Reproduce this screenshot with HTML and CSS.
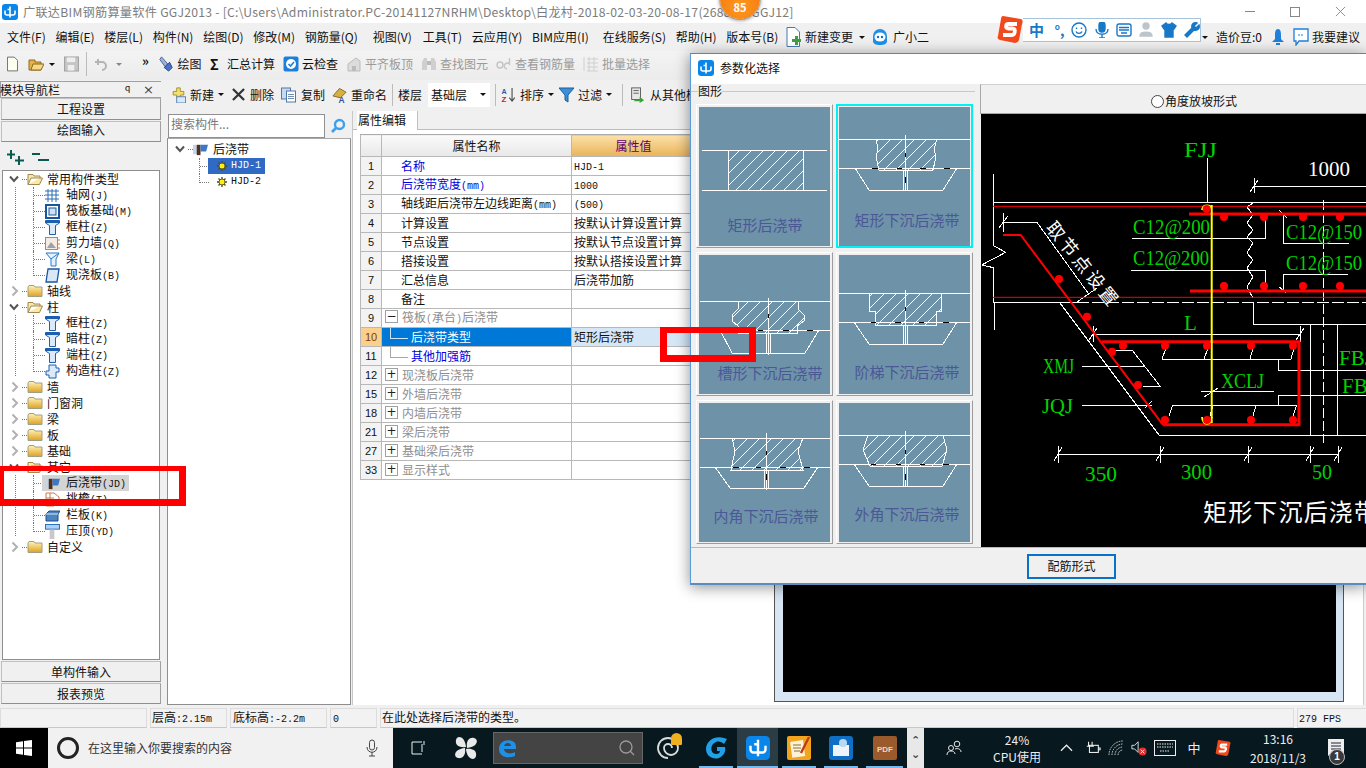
FILE: index.html
```html
<!DOCTYPE html>
<html lang="zh-CN">
<head>
<meta charset="utf-8">
<title>广联达BIM钢筋算量软件 GGJ2013</title>
<link rel="stylesheet" href="styles.css">
</head>
<body>
<svg class="defs" aria-hidden="true">
  <defs>
    <pattern id="hatch" patternUnits="userSpaceOnUse" width="12" height="12"><path class="hl" d="M0 12L12 0"/></pattern>
    <linearGradient id="fg" x1="0" y1="0" x2="0" y2="1"><stop offset="0" stop-color="#fff3b8"/><stop offset="1" stop-color="#e0a020"/></linearGradient>
    <symbol id="logo" viewBox="0 0 16 16"><rect width="16" height="16" rx="3" fill="#0a86ea"/><path d="M8 2.5V13.5M3 6.5V9a2 2 0 0 0 2 2H11a2 2 0 0 0 2-2V6.5M5.5 5.5H8" fill="none" stroke="#fff" stroke-width="1.6"/></symbol>
    <symbol id="fc" viewBox="0 0 16 14"><path d="M1 3V12.5H15V3H8L7 1.5H2L1 3Z" fill="url(#fg)" stroke="#a0a080"/></symbol>
    <symbol id="fo" viewBox="0 0 16 14"><path d="M1 12.5V2.500H6L7 4H13V6H4L1 12.5H12.500L15.500 6H13" fill="#f9e9a8" stroke="#a08850"/></symbol>
    <symbol id="chr" viewBox="0 0 8 12"><path d="M1.500 1.500L6 6L1.500 10.500" fill="none" stroke="#b0b0b0" stroke-width="2"/></symbol>
    <symbol id="chd" viewBox="0 0 10 8"><path d="M1 1.500L5 6L9 1.500" fill="none" stroke="#555" stroke-width="2"/></symbol>
    <symbol id="tcol" viewBox="0 0 15 15"><path d="M.5.500H14.500V3L10.500 5.500V14.500H4.500V5.500L.5 3Z" fill="#dbe9f9" stroke="#1d5fae"/><path d="M.5 2H14.500" stroke="#1d5fae" stroke-width="2"/></symbol>
    <symbol id="grid" viewBox="0 0 15 15"><path d="M3 1V14M7 1V14M11 1V14M0 3H14M0 7H14M0 11H14" stroke="#2f6cb8" fill="none"/></symbol>
    <symbol id="raft" viewBox="0 0 15 15"><rect x="1" y="1" width="13" height="13" fill="#fff" stroke="#17579e" stroke-width="2"/><rect x="4" y="4" width="7" height="7" fill="#cfe0f4" stroke="#17579e"/></symbol>
    <symbol id="wall" viewBox="0 0 15 15"><rect x=".5" y="1.500" width="12" height="12" fill="#f4ece4" stroke="#c08060"/><path d="M2 12L6 6L11 12Z" fill="#a0a0a0"/><path d="M13 4H15M13 8H15M13 12H15" stroke="#e07820"/></symbol>
    <symbol id="beam" viewBox="0 0 15 15"><path d="M1 1H14L11 7V14H6V7Z" fill="#e4f0fb" stroke="#2a78c8"/><path d="M6 7L14 1" stroke="#2a78c8"/></symbol>
    <symbol id="slab" viewBox="0 0 15 15"><path d="M3 1H14L12 14H1Z" fill="#d8e8f8" stroke="#17579e" stroke-width="1.300"/></symbol>
    <symbol id="post" viewBox="0 0 15 15"><path d="M4 1H11V4H14V8H11V14H4V11H1V7H4Z" fill="#dbe9f9" stroke="#1d5fae"/></symbol>
    <symbol id="band" viewBox="0 0 16 14"><path d="M0 2H5V12H0Z" fill="#c8d4e4"/><path d="M4 2H8V13H4Z" fill="#50301c"/><path d="M8 2H16L14 9H8Z" fill="#3e78c4"/></symbol>
    <symbol id="eave" viewBox="0 0 15 15"><path d="M1 1H9L14 5V9H9V14H1Z" fill="#fff" stroke="#d07a50"/><path d="M5 1V14M1 6H9" stroke="#d07a50"/></symbol>
    <symbol id="rail" viewBox="0 0 15 15"><path d="M1 6L4 3H15L13 6V13H1Z" fill="#4c84c0" stroke="#1d4f8e"/><path d="M1 6H13" stroke="#d8e8f8"/></symbol>
    <symbol id="ptop" viewBox="0 0 16 16"><rect x=".5" y=".5" width="15" height="5" fill="#aed0f4" stroke="#1d6fc0"/><rect x="5" y="6" width="5" height="10" fill="#c8c8c8"/></symbol>
    <symbol id="gear" viewBox="0 0 12 12"><path d="M6 0V12M0 6H12M1.800 1.800L10.200 10.200M10.200 1.800L1.800 10.200" stroke="#4a4a20" stroke-width="1.600"/><circle cx="6" cy="6" r="3.600" fill="#ffee10" stroke="#4a4a20"/></symbol>
    <symbol id="mag" viewBox="0 0 16 16"><circle cx="9.500" cy="6.500" r="4.500" fill="none" stroke="#3da0ef" stroke-width="2.400"/><path d="M6 10L2 14" stroke="#3da0ef" stroke-width="2.600"/></symbol>
    <symbol id="doc" viewBox="0 0 12 16"><path d="M.5.500H8L11.500 4V15.500H.5Z" fill="#fdfdf0" stroke="#666"/></symbol>
    <symbol id="open" viewBox="0 0 16 16"><path d="M1 14V4H7V6H13V14Z" fill="#e8b048" stroke="#8a6a20"/><path d="M3 14L5 8H16L13 14Z" fill="#f8d880" stroke="#8a6a20"/></symbol>
    <symbol id="save" viewBox="0 0 16 16"><rect x=".5" y=".5" width="15" height="15" fill="#c4c4c4" stroke="#a0a0a0"/><rect x="3" y="1" width="9" height="5" fill="#eee"/><rect x="4" y="9" width="7" height="6" fill="#eee"/></symbol>
    <symbol id="undo" viewBox="0 0 14 14"><path d="M4 2V8M1 5H8A4 4 0 0 1 8 13" fill="none" stroke="#b4b4b4" stroke-width="2"/></symbol>
    <symbol id="paint" viewBox="0 0 16 18"><path d="M3 1L10 9L7 12L1 4Z" fill="#98b4d8" stroke="#4a5a90"/><path d="M6 13L12 7L15 13L11 17Z" fill="#4a70c8" stroke="#283c80"/></symbol>
    <symbol id="cloudok" viewBox="0 0 16 16"><rect x=".5" y=".5" width="15" height="15" rx="2" fill="#1e7fd8"/><circle cx="8" cy="8" r="5" fill="#fff"/><path d="M5.500 8L7.500 10L11 6" fill="none" stroke="#1e7fd8" stroke-width="1.600"/></symbol>
    <symbol id="gbox" viewBox="0 0 16 16"><path d="M2 15V8L10 2L14 5V15Z" fill="#dcdcdc" stroke="#bbb"/><path d="M6 15V10H10V15" fill="#bbb"/></symbol>
    <symbol id="gbin" viewBox="0 0 16 16"><path d="M1 6L3 2H6V14H1ZM15 6L13 2H10V14H15Z" fill="#cfcfcf"/><rect x="6" y="5" width="4" height="4" fill="#bbb"/></symbol>
    <symbol id="gvw" viewBox="0 0 16 16"><circle cx="4" cy="9" r="3" fill="none" stroke="#c4c4c4" stroke-width="1.400"/><path d="M11 13A3 3 0 1 1 13.500 8V2" fill="none" stroke="#c4c4c4" stroke-width="1.400"/></symbol>
    <symbol id="gbat" viewBox="0 0 16 16"><path d="M1 1V15M4 3H15M4 7H15M4 11H15M4 15H15M6 1V15M11 1V15" stroke="#cfcfcf"/></symbol>
    <symbol id="add" viewBox="0 0 16 18"><path d="M6 1H10V5H14V9H10V12H6V9H2V5H6Z" fill="#f4e070" stroke="#a08820"/><rect x="6" y="11" width="10" height="7" fill="#dce8f8" stroke="#4a78b0"/></symbol>
    <symbol id="xx" viewBox="0 0 14 14"><path d="M1 1L13 13M13 1L1 13" stroke="#333" stroke-width="2.400"/></symbol>
    <symbol id="copy" viewBox="0 0 15 15"><rect x=".5" y=".5" width="9" height="11" fill="#c8daf0" stroke="#5078a8"/><rect x="5.500" y="3.500" width="9" height="11" fill="#fff" stroke="#5078a8"/><path d="M7 7H13M7 9H13M7 11H13" stroke="#7090b8"/></symbol>
    <symbol id="ren" viewBox="0 0 16 16"><path d="M1 9L8 1L15 5L9 11Z" fill="#d8b040" stroke="#806820"/><text x="7" y="16" class="ren-a">A</text></symbol>
    <symbol id="sortaz" viewBox="0 0 16 18"><path d="M12 1V15M9 12L12 16L15 12" fill="none" stroke="#444" stroke-width="1.200"/><text x="0" y="8" class="az-a">A</text><text x="0" y="17" class="az-z">Z</text></symbol>
    <symbol id="funnel" viewBox="0 0 15 16"><path d="M0 1H15L9 8V15L6 13V8Z" fill="#3a90d8" stroke="#1c5c98"/></symbol>
    <symbol id="import" viewBox="0 0 16 18"><rect x="2" y="1" width="10" height="13" fill="#e8e8e8" stroke="#555"/><path d="M4 4H10M4 7H10" stroke="#555"/><path d="M5 14H11V11L16 15L11 18V16H5Z" fill="#3ca03c"/></symbol>
    <symbol id="newchg" viewBox="0 0 15 20"><path d="M1 .5H9L13.500 5V19.500H1Z" fill="#fff" stroke="#4a78b0"/><path d="M9 9H12V12H15V15H12V18H9V15H6V12H9Z" fill="#3ea040"/></symbol>
    <symbol id="ghost" viewBox="0 0 18 18"><path d="M2 8A7 7 0 0 1 16 8V13C16 16 13 17 9 17S2 16 2 13Z" fill="#1e90e8"/><ellipse cx="9" cy="9" rx="5.500" ry="4.500" fill="#fff"/><circle cx="7" cy="9" r="1.200" fill="#1e6ec0"/><circle cx="11" cy="9" r="1.200" fill="#1e6ec0"/></symbol>
    <symbol id="bell" viewBox="0 0 12 18"><path d="M6 1C3.500 1 3 4 3 7V11L0 14H12L9 11V7C9 4 8.500 1 6 1Z" fill="#1e80dc"/><path d="M4 15H8V17H4Z" fill="#1e80dc"/></symbol>
    <symbol id="chat" viewBox="0 0 16 18"><path d="M1 1H15V13H6L3 17V13H1Z" fill="#fff" stroke="#1e80dc" stroke-width="1.300"/><path d="M5 7H11" stroke="#1e80dc" stroke-dasharray="2 1"/></symbol>
    <symbol id="sg" viewBox="0 0 26 27"><path d="M6 0L24 3C26 4 26 6 25 8L22 24C21 26 20 27 18 27L3 24C1 23 0 22 1 20L4 3C4 1 5 0 6 0Z" fill="#f2491c"/><path d="M20 8H11C9 8 8 12 11 12.500H16C19 13 18 19 15 19H6" fill="none" stroke="#fff" stroke-width="3.800"/></symbol>
    <symbol id="win" viewBox="0 0 16 16"><path d="M0 2.200L7 1.200V7.600H0ZM8 1L16 0V7.600H8ZM0 8.400H7V14.800L0 13.800ZM8 8.400H16V16L8 15Z" fill="#fff"/></symbol>
    <symbol id="fan" viewBox="0 0 24 24"><path d="M12 11C5 12 1 9 2 4S11 0 12 11ZM13 12C12 5 15 1 20 2S24 11 13 12ZM12 13C19 12 23 15 22 20S13 24 12 13ZM11 12C12 19 9 23 4 22S0 13 11 12Z" fill="#e8eaea"/></symbol>
    <symbol id="ie" viewBox="0 0 20 22"><path d="M18 12H6C6 16 12 18 17 15V19C10 22 1 20 1 12C1 4 10 1 16 5C18 7 18 9 18 12ZM6 9H13C13 5 7 5 6 9Z" fill="#1e90e8"/></symbol>
    <symbol id="gg" viewBox="0 0 24 24"><path d="M20 2C12-1 2 4 2 13C2 20 9 24 15 22C20 20 22 15 21 11H13V15H16C16 18 12 19 9 17C6 14 7 8 12 6C15 5 18 6 20 8L23 3Z" fill="#21a0e8"/></symbol>
    <symbol id="swirl" viewBox="0 0 24 24"><path d="M12 22A10 10 0 1 1 22 12A7 7 0 0 1 8 12A4 4 0 0 1 16 12" fill="none" stroke="#d8dcdc" stroke-width="1.800"/></symbol>
    <symbol id="notes" viewBox="0 0 24 24"><rect width="24" height="24" rx="2" fill="#f2a51c"/><rect x="4" y="5" width="13" height="16" fill="#fdf4d8" transform="rotate(-8 10 12)"/><path d="M6 9H14M6 12H14M7 15H13" stroke="#8a6a40"/><path d="M22 1L14 17" stroke="#c03a18" stroke-width="2.400"/></symbol>
    <symbol id="book" viewBox="0 0 24 24"><rect width="24" height="24" rx="3" fill="#0f6fc4"/><path d="M4 9H12V20H4ZM12 9H20V20H12Z" fill="#eef4fa"/><circle cx="14" cy="7" r="4" fill="#b8d8f4"/></symbol>
    <symbol id="pdf" viewBox="0 0 24 24"><rect width="24" height="24" rx="2" fill="#9a5a2c"/><text x="12" y="16" class="pdf-t">PDF</text></symbol>
    <symbol id="people" viewBox="0 0 16 16"><circle cx="11" cy="4" r="2.800" fill="none" stroke="#e8e8e8"/><circle cx="5" cy="8" r="2.500" fill="none" stroke="#e8e8e8"/><path d="M1 15C1 12 3 11 5 11S9 12 9 14M9 9C12 8 15 9 15 12" fill="none" stroke="#e8e8e8"/></symbol>
    <symbol id="plug" viewBox="0 0 18 16"><rect x="5" y="5" width="10" height="8" fill="none" stroke="#eee" stroke-width="1.200"/><path d="M4 1V6M8 1V6M2 6H10M15 8H17V10H15" stroke="#eee" stroke-width="1.200" fill="none"/></symbol>
    <symbol id="wifi" viewBox="0 0 16 16"><path d="M1 15A14 14 0 0 1 15 1M4 15A11 11 0 0 1 15 4M7 15A8 8 0 0 1 15 7M10 15A5 5 0 0 1 15 10" fill="none" stroke="#d8d8d8" stroke-dasharray="1.500 1"/></symbol>
    <symbol id="spk" viewBox="0 0 18 18"><path d="M1 6H4L8 2V14L4 10H1Z" fill="none" stroke="#eee"/><circle cx="13" cy="13" r="4.500" fill="#e03030"/><path d="M11 11L15 15M15 11L11 15" stroke="#fff"/></symbol>
    <symbol id="kbd" viewBox="0 0 22 16"><rect x=".5" y=".5" width="21" height="15" fill="none" stroke="#eee"/><path d="M3 4H19M3 7H19M6 11H16" stroke="#eee" stroke-dasharray="1.500 1"/></symbol>
    <symbol id="note" viewBox="0 0 16 18"><path d="M0 0H16V14H4L0 17Z" fill="#eee"/><path d="M3 4H13M3 7H13M3 10H13" stroke="#223"/></symbol>
    <symbol id="micg" viewBox="0 0 12 18"><rect x="3.500" y="1" width="5" height="10" rx="2.500" fill="none" stroke="#444"/><path d="M1 8C1 15 11 15 11 8M6 13V17M3 17H9" fill="none" stroke="#444"/></symbol>
    <symbol id="taskv" viewBox="0 0 16 18"><path d="M3 3H13M3 15H13M3 3V15" stroke="#eee" fill="none"/><path d="M13 5V13" stroke="#eee"/><path d="M15 2V6" stroke="#eee"/></symbol>
  </defs>
</svg>

<div class="screen">
  <header class="titlebar">
    <svg class="ico16"><use href="#logo"/></svg>
    <span class="title-text">广联达BIM钢筋算量软件 GGJ2013 - [C:\Users\Administrator.PC-20141127NRHM\Desktop\白龙村-2018-02-03-20-08-17(2688版).GGJ12]</span>
    <div class="winbtns">
      <span class="wb-min"></span>
      <span class="wb-max"></span>
      <svg class="wb-close" viewBox="0 0 12 12"><path d="M1 1L11 11M11 1L1 11"/></svg>
    </div>
  </header>

  <nav class="menubar">
    <span class="mi">文件(F)</span><span class="mi">编辑(E)</span><span class="mi">楼层(L)</span><span class="mi">构件(N)</span><span class="mi">绘图(D)</span><span class="mi">修改(M)</span><span class="mi mi-q">钢筋量(Q)</span><span class="mi mi-v">视图(V)</span><span class="mi">工具(T)</span><span class="mi">云应用(Y)</span><span class="mi mi-bim">BIM应用(I)</span><span class="mi">在线服务(S)</span><span class="mi">帮助(H)</span><span class="mi">版本号(B)</span>
    <svg class="mico1"><use href="#newchg"/></svg><span class="mi mi-a">新建变更</span><i class="arrow arrow-m"></i>
    <svg class="mico2"><use href="#ghost"/></svg><span class="mi">广小二</span>
    <div class="menu-right">
      <i class="arrow"></i><span class="mi mi-b">造价豆:0</span>
      <svg class="mico3"><use href="#bell"/></svg>
      <svg class="mico4"><use href="#chat"/></svg><span class="mi">我要建议</span>
    </div>
  </nav>

  <div class="toolbar">
    <div class="tgroup tg1">
      <svg class="t-doc"><use href="#doc"/></svg>
      <svg class="t-open"><use href="#open"/></svg><i class="arrow"></i>
      <svg class="t-save"><use href="#save"/></svg>
      <i class="tsep"></i>
      <svg class="t-undo"><use href="#undo"/></svg><i class="arrow arrow-g"></i>
      <span class="more">»</span>
    </div>
    <div class="tgroup tg2">
      <svg class="t-i"><use href="#paint"/></svg><span class="t-l">绘图</span>
      <span class="sigma">Σ</span><span class="t-l">汇总计算</span>
      <svg class="t-i"><use href="#cloudok"/></svg><span class="t-l">云检查</span>
      <svg class="t-i"><use href="#gbox"/></svg><span class="t-l dim">平齐板顶</span>
      <svg class="t-i"><use href="#gbin"/></svg><span class="t-l dim">查找图元</span>
      <svg class="t-i"><use href="#gvw"/></svg><span class="t-l dim">查看钢筋量</span>
      <svg class="t-i"><use href="#gbat"/></svg><span class="t-l dim">批量选择</span>
    </div>
  </div>

  <main class="workspace">
    <aside class="leftnav">
      <div class="nav-head"><span>模块导航栏</span><span class="pin">ꟼ</span><span class="closex">×</span></div>
      <button class="navbtn nb1">工程设置</button>
      <button class="navbtn nb2">绘图输入</button>
      <div class="tree-tools">
        <svg class="pm" viewBox="0 0 17 15"><path d="M4 0V9M0 4.500H8M12 6V15M8 10.500H17" stroke="#0a5a50" stroke-width="2"/></svg>
        <svg class="pm pm2" viewBox="0 0 17 15"><path d="M0 4H8M6 10H17" stroke="#0a5a50" stroke-width="2"/></svg>
      </div>
      <div class="tree navtree">
        <div class="row"><svg class="chev-d"><use href="#chd"/></svg><i class="hdot"></i><svg class="fold"><use href="#fo"/></svg><span>常用构件类型</span></div>
        <div class="kids">
          <div class="leaf"><i class="tee"></i><svg class="lic"><use href="#grid"/></svg><span>轴网<b>(J)</b></span></div>
          <div class="leaf"><i class="tee"></i><svg class="lic"><use href="#raft"/></svg><span>筏板基础<b>(M)</b></span></div>
          <div class="leaf"><i class="tee"></i><svg class="lic"><use href="#tcol"/></svg><span>框柱<b>(Z)</b></span></div>
          <div class="leaf"><i class="tee"></i><svg class="lic"><use href="#wall"/></svg><span>剪力墙<b>(Q)</b></span></div>
          <div class="leaf"><i class="tee"></i><svg class="lic"><use href="#beam"/></svg><span>梁<b>(L)</b></span></div>
          <div class="leaf"><i class="tee"></i><svg class="lic"><use href="#slab"/></svg><span>现浇板<b>(B)</b></span></div>
        </div>
        <div class="row"><svg class="chev-r"><use href="#chr"/></svg><i class="hdot"></i><svg class="fold"><use href="#fc"/></svg><span>轴线</span></div>
        <div class="row"><svg class="chev-d"><use href="#chd"/></svg><i class="hdot"></i><svg class="fold"><use href="#fo"/></svg><span>柱</span></div>
        <div class="kids">
          <div class="leaf"><i class="tee"></i><svg class="lic"><use href="#tcol"/></svg><span>框柱<b>(Z)</b></span></div>
          <div class="leaf"><i class="tee"></i><svg class="lic"><use href="#tcol"/></svg><span>暗柱<b>(Z)</b></span></div>
          <div class="leaf"><i class="tee"></i><svg class="lic"><use href="#tcol"/></svg><span>端柱<b>(Z)</b></span></div>
          <div class="leaf"><i class="tee"></i><svg class="lic"><use href="#post"/></svg><span>构造柱<b>(Z)</b></span></div>
        </div>
        <div class="row"><svg class="chev-r"><use href="#chr"/></svg><i class="hdot"></i><svg class="fold"><use href="#fc"/></svg><span>墙</span></div>
        <div class="row"><svg class="chev-r"><use href="#chr"/></svg><i class="hdot"></i><svg class="fold"><use href="#fc"/></svg><span>门窗洞</span></div>
        <div class="row"><svg class="chev-r"><use href="#chr"/></svg><i class="hdot"></i><svg class="fold"><use href="#fc"/></svg><span>梁</span></div>
        <div class="row"><svg class="chev-r"><use href="#chr"/></svg><i class="hdot"></i><svg class="fold"><use href="#fc"/></svg><span>板</span></div>
        <div class="row"><svg class="chev-r"><use href="#chr"/></svg><i class="hdot"></i><svg class="fold"><use href="#fc"/></svg><span>基础</span></div>
        <div class="row"><svg class="chev-d"><use href="#chd"/></svg><i class="hdot"></i><svg class="fold"><use href="#fo"/></svg><span>其它</span></div>
        <div class="kids">
          <div class="leaf selected"><i class="tee"></i><span class="sel-wrap"><svg class="lic"><use href="#band"/></svg><span>后浇带<b>(JD)</b></span></span></div>
          <div class="leaf"><i class="tee"></i><svg class="lic"><use href="#eave"/></svg><span>挑檐<b>(T)</b></span></div>
          <div class="leaf"><i class="tee"></i><svg class="lic"><use href="#rail"/></svg><span>栏板<b>(K)</b></span></div>
          <div class="leaf"><i class="tee"></i><svg class="lic"><use href="#ptop"/></svg><span>压顶<b>(YD)</b></span></div>
        </div>
        <div class="row"><svg class="chev-r"><use href="#chr"/></svg><i class="hdot"></i><svg class="fold"><use href="#fc"/></svg><span>自定义</span></div>
      </div>
      <button class="navbtn nb3">单构件输入</button>
      <button class="navbtn nb4">报表预览</button>
    </aside>

    <div class="content">
      <div class="subbar">
        <svg class="s-i s-add"><use href="#add"/></svg><span class="s-l">新建</span><i class="arrow"></i>
        <svg class="s-i s-x"><use href="#xx"/></svg><span class="s-l s-del">删除</span>
        <svg class="s-i s-copy"><use href="#copy"/></svg><span class="s-l s-cp">复制</span>
        <svg class="s-i s-ren"><use href="#ren"/></svg><span class="s-l">重命名</span>
        <i class="ssep ssep1"></i><span class="s-l">楼层</span>
        <span class="floor-sel"><span>基础层</span><i class="arrow"></i></span>
        <i class="ssep"></i>
        <svg class="s-i"><use href="#sortaz"/></svg><span class="s-l">排序</span><i class="arrow arrow-t"></i>
        <svg class="s-i"><use href="#funnel"/></svg><span class="s-l">过滤</span><i class="arrow arrow-t"></i>
        <i class="ssep ssep3"></i>
        <svg class="s-i s-imp"><use href="#import"/></svg><span class="s-l">从其他楼层复制构件</span>
      </div>
      <div class="panes">
        <section class="midpane">
          <div class="searchrow"><div class="searchbox">搜索构件...</div><svg class="searchico"><use href="#mag"/></svg></div>
          <div class="tree comptree">
            <div class="row"><svg class="chev-d"><use href="#chd"/></svg><i class="hdot"></i><svg class="lic"><use href="#band"/></svg><span>后浇带</span></div>
            <div class="ckids">
              <div class="cleaf"><i class="tee"></i><span class="hjd hjd-on"><svg class="gear"><use href="#gear"/></svg><b>HJD-1</b></span></div>
              <div class="cleaf"><i class="tee"></i><span class="hjd"><svg class="gear"><use href="#gear"/></svg><b>HJD-2</b></span></div>
            </div>
          </div>
        </section>
        <section class="proppane">
          <div class="tabs"><span class="tab">属性编辑</span></div>
          <table class="props">
            <colgroup><col class="c-n"><col class="c-k"><col class="c-v"></colgroup>
            <tr class="ph"><th></th><th>属性名称</th><th class="valh">属性值</th></tr>
            <tr><td class="n">1</td><td class="k blue">名称</td><td class="v"><b>HJD-1</b></td></tr>
            <tr><td class="n">2</td><td class="k blue">后浇带宽度<b>(mm)</b></td><td class="v"><b>1000</b></td></tr>
            <tr><td class="n">3</td><td class="k">轴线距后浇带左边线距离<b>(mm)</b></td><td class="v"><b>(500)</b></td></tr>
            <tr><td class="n">4</td><td class="k">计算设置</td><td class="v">按默认计算设置计算</td></tr>
            <tr><td class="n">5</td><td class="k">节点设置</td><td class="v">按默认节点设置计算</td></tr>
            <tr><td class="n">6</td><td class="k">搭接设置</td><td class="v">按默认搭接设置计算</td></tr>
            <tr><td class="n">7</td><td class="k">汇总信息</td><td class="v">后浇带加筋</td></tr>
            <tr><td class="n">8</td><td class="k">备注</td><td class="v"></td></tr>
            <tr><td class="n">9</td><td class="k gray"><i class="box">−</i>筏板<b>(</b>承台<b>)</b>后浇带</td><td class="v"></td></tr>
            <tr class="cur"><td class="n">10</td><td class="k kid2 branch">后浇带类型</td><td class="v">矩形后浇带</td></tr>
            <tr><td class="n">11</td><td class="k kid2 blue branch branch-end">其他加强筋</td><td class="v"></td></tr>
            <tr><td class="n">12</td><td class="k gray"><i class="box">+</i>现浇板后浇带</td><td class="v"></td></tr>
            <tr><td class="n">15</td><td class="k gray"><i class="box">+</i>外墙后浇带</td><td class="v"></td></tr>
            <tr><td class="n">18</td><td class="k gray"><i class="box">+</i>内墙后浇带</td><td class="v"></td></tr>
            <tr><td class="n">21</td><td class="k gray"><i class="box">+</i>梁后浇带</td><td class="v"></td></tr>
            <tr><td class="n">27</td><td class="k gray"><i class="box">+</i>基础梁后浇带</td><td class="v"></td></tr>
            <tr><td class="n">33</td><td class="k gray"><i class="box">+</i>显示样式</td><td class="v"></td></tr>
          </table>
        </section>
        <section class="preview"><div class="preview-frame"><div class="preview-black"></div></div></section>
      </div>
    </div>
  </main>

  <footer class="statusbar">
    <span class="st st1"></span>
    <span class="st st2">层高<b>:2.15m</b></span>
    <span class="st st3">底标高<b>:-2.2m</b></span>
    <span class="st st4"><b>0</b></span>
    <span class="st st5">在此处选择后浇带的类型。</span>
    <span class="st st6"><b>279 FPS</b></span>
  </footer>

  <div class="taskbar">
    <div class="tb tb-start"><svg class="tb-win"><use href="#win"/></svg></div>
    <div class="tb tb-search"><i class="cortana"></i><span class="tb-hint">在这里输入你要搜索的内容</span><svg class="tb-mic"><use href="#micg"/></svg></div>
    <div class="tb tb-tv"><svg class="tb-ic18"><use href="#taskv"/></svg></div>
    <div class="tb tb-fan"><svg class="tb-ic26"><use href="#fan"/></svg></div>
    <div class="tb tb-ie"><svg class="tb-e"><use href="#ie"/></svg><svg class="tb-ms" viewBox="0 0 16 16"><circle cx="7" cy="7" r="6"/><path d="M11 11L15 15"/></svg></div>
    <div class="tb tb-sw"><svg class="tb-ic24"><use href="#swirl"/></svg><i class="tb-bellmark"></i></div>
    <div class="tb tb-g run"><svg class="tb-ic24"><use href="#gg"/></svg></div>
    <div class="tb tb-act run"><svg class="tb-ic24"><use href="#logo"/></svg></div>
    <div class="tb tb-n run"><svg class="tb-ic24"><use href="#notes"/></svg></div>
    <div class="tb tb-n run"><svg class="tb-ic24"><use href="#book"/></svg></div>
    <div class="tb tb-p run"><svg class="tb-ic24"><use href="#pdf"/></svg></div>
    <div class="tb tb-scroll"><span>⌃</span><span>⌄</span></div>
    <div class="tb tb-people"><svg class="tb-ic16"><use href="#people"/></svg></div>
    <div class="tb tb-cpu"><span>24%</span><span>CPU使用</span></div>
    <div class="tb tb-up"><svg viewBox="0 0 14 8" class="tb-caret"><path d="M1 7L7 1L13 7"/></svg></div>
    <div class="tb tb-tray22"><svg class="tb-ic16"><use href="#plug"/></svg></div>
    <div class="tb tb-tray24"><svg class="tb-ic16"><use href="#wifi"/></svg></div>
    <div class="tb tb-tray22"><svg class="tb-ic16"><use href="#spk"/></svg></div>
    <div class="tb tb-tray30"><svg class="tb-kbd"><use href="#kbd"/></svg></div>
    <div class="tb tb-zh">中</div>
    <div class="tb tb-tray30"><svg class="tb-ic16"><use href="#sg"/></svg></div>
    <div class="tb tb-clock"><span>13:16</span><span>2018/11/3</span></div>
    <div class="tb tb-note"><svg class="tb-ic18"><use href="#note"/></svg><i class="tb-count">1</i></div>
  </div>

  <div class="badge85"><span>85</span></div>

  <div class="sogou">
    <svg class="sg-logo"><use href="#sg"/></svg>
    <div class="sg-bar">
      <span class="sg-zh">中</span><span class="sg-pt">°,</span>
      <svg class="sg-i" viewBox="0 0 16 16"><circle cx="8" cy="8" r="7"/><path d="M5 9.500C6 12 10 12 11 9.500M5.500 5.500V7M10.500 5.500V7"/></svg>
      <svg class="sg-i" viewBox="0 0 16 16"><rect class="sg-fill" x="5" y="0" width="6" height="10" rx="3"/><path d="M2 7C2 14 14 14 14 7M8 12V16M5 16H11"/></svg>
      <svg class="sg-i" viewBox="0 0 16 16"><rect x="1" y="2" width="14" height="12" rx="2"/><path d="M3 5.500H13M3 8H13M5 11H11"/></svg>
      <svg class="sg-i sg-gray" viewBox="0 0 16 16"><circle class="sg-gfill" cx="7" cy="4" r="3"/><path class="sg-gfill" d="M1 14C1 9 13 9 13 14Z"/></svg>
      <svg class="sg-i" viewBox="0 0 16 16"><path class="sg-fill" d="M5 1L1 4L3 7L4 6V15H12V6L13 7L15 4L11 1C10 3 6 3 5 1Z"/></svg>
      <svg class="sg-i" viewBox="0 0 16 16"><path class="sg-fill" d="M15 3L12 6L10 4L13 1C10 0 7 2 8 6L1 13L3 15L10 8C14 9 16 6 15 3Z"/></svg>
    </div>
  </div>

  <div class="dialog">
    <div class="dlg-title"><svg class="ico16"><use href="#logo"/></svg><span>参数化选择</span></div>
    <div class="dlg-body">
      <fieldset class="shapes">
        <legend>图形</legend>
        <div class="thumbs">
          <div class="thumb">
            <svg viewBox="0 0 131 139">
              <rect class="hf" x="29" y="43" width="75" height="40"/>
              <path class="ln" d="M3 43H128M3 83H128M29 43V83M104 43V83"/>
              <text class="tt" x="66" y="124">矩形后浇带</text>
            </svg>
          </div>
          <div class="thumb thumb-on">
            <svg viewBox="0 0 131 139">
              <path class="hf" d="M37 32H98L96 50L94 63H40L38 50Z"/>
              <path class="ln" d="M0 32H131M0 61H131M37 32L39 42L37 50L40 63H94L97 50L95 42L98 32M66 28V84M16 61L30 83H104L118 61M64 63V83M68 63V83"/>
              <path class="dk" d="M33 61H39M58 61H63M81 61H87M105 61H111M66 46V50M66 70V76"/>
              <text class="tt" x="68" y="119">矩形下沉后浇带</text>
            </svg>
          </div>
          <div class="thumb">
            <svg viewBox="0 0 131 139">
              <path class="hf" d="M39 46H99V54L105 60V66L99 71V78H39V71L33 66V60L39 54Z"/>
              <path class="ln" d="M1 46H131M1 75H131M39 46V54L33 60V66L39 71V78H98V71L105 66V60L99 54V46M69 43V100M21 75L33 98H106L120 75M67 78V98M71 78V98"/>
              <path class="dk" d="M59 75H64M84 75H90M108 75H114M69 59V63"/>
              <text class="tt" x="71" y="124">槽形下沉后浇带</text>
            </svg>
          </div>
          <div class="thumb">
            <svg viewBox="0 0 131 139">
              <path class="hf" d="M30 38H102V56H97V70H36V56H30Z"/>
              <path class="ln" d="M0 38H131M0 67H131M30 38V56H36V70H97V56H102V38M66 35V90M15 67L30 89H104L118 67M64 70V89M68 70V89"/>
              <path class="dk" d="M32 67H37M56 67H62M80 67H85M104 67H110M66 52V56"/>
              <text class="tt" x="68" y="123">阶梯下沉后浇带</text>
            </svg>
          </div>
          <div class="thumb">
            <svg viewBox="0 0 131 139">
              <path class="hf" d="M33 35H104L99 48L104 67H32L36 48Z"/>
              <path class="ln" d="M1 35H131M1 64H131M33 35L36 48L32 67H104L99 48L104 35M67 30V87M16 64L31 85H105L119 64M65 67V85M69 67V85"/>
              <path class="dk" d="M34 64H40M57 64H62M81 64H87M105 64H111M67 48V52M67 71V77"/>
              <text class="tt" x="67" y="119">内角下沉后浇带</text>
            </svg>
          </div>
          <div class="thumb">
            <svg viewBox="0 0 131 139">
              <path class="hf" d="M29 32H104L108 47L103 63H31L24 47Z"/>
              <path class="ln" d="M0 32H131M0 61H131M29 32L24 47L31 63H103L108 47L104 32M66 28V84M15 61L30 83H104L118 61M64 63V83M68 63V83"/>
              <path class="dk" d="M32 61H37M57 61H62M81 61H86M104 61H110M66 47V51M66 71V77"/>
              <text class="tt" x="68" y="117">外角下沉后浇带</text>
            </svg>
          </div>
        </div>
      </fieldset>
      <div class="drawing">
        <div class="radio-row"><i class="radio"></i><span>角度放坡形式</span></div>
        <svg class="cad" viewBox="981 114 385 433">
          <path class="w" d="M993.500 174V245.700L1005.700 252.300L981.700 265L993.500 267.700V302M993 202.300H1366M993 302.300H1077"/>
          <path class="w dash" d="M1077 302.300H1366"/>
          <path class="w" d="M1207.300 158V202M1254 178V193M1250 192L1258 180M1254 186H1366"/>
          <path class="w" d="M1253 203L1247 207L1253 215L1247 223L1253 230L1247 237L1253 243L1247 253L1253 260L1247 268L1253 277L1247 287L1253 298"/>
          <path class="w" d="M1132 238H1265.700V218M1131 270.300H1265.700V290M1283 215V243H1349M1279 210L1287 218M1283 274H1348M1283 274V290L1279 287L1286 293"/>
          <path class="w" d="M1003 213V232M999 228L1008 216M1003 222H1036.700L1088 293M1077 302L1097 288M1060 303L1159 435H1366"/>
          <path class="w" d="M1253 302V324.300H1366M1310 324V435M1337.700 324V435"/>
          <path class="w dashdot" d="M1323 200V443"/>
          <path class="w" d="M1093 334.300H1300M1093 326V342M1089 340L1097 328M1300 326V342M1296 340L1304 328"/>
          <path class="w" d="M1162 359H1291M1162 359L1166 348M1250 359L1253 348M1291 359L1294 348M1204 359L1208 348M1278 359V370.700H1366M1278 405V395H1366M1172.700 405H1296.700M1172.700 405L1169 416M1256 405L1253 416M1296.700 405L1293 416M1213 405L1210 416"/>
          <path class="w" d="M1201 391H1274M1204 397L1218 388M1082 366.300H1145M1082 405H1152M1145 408L1152 401M1115 350H1132L1160 386H1143"/>
          <path class="w" d="M1058 454.300H1338M1058 446V463M1054 461L1062 447M1160 446V463M1156 461L1164 447M1248 446V463M1244 461L1252 447M1310 446V463M1306 461L1314 447M1338 446V463M1334 461L1342 447"/>
          <path class="w" d="M994 302V330"/>
          <path class="r1" d="M993 206.300H1366M993 297.300H1366"/>
          <path class="r3" d="M1189 214H1366M1190 291H1366"/>
          <path class="r2" d="M1003 235H1020.700L1162.700 424.700"/>
          <path class="r3" d="M1101.700 341.700H1299V424.700H1162.700"/>
          <path class="y2" d="M1211.700 205V423M1202 210C1203 204 1211 204 1211.700 210M1202 417C1203 426 1211 426 1212 417"/>
          <g class="dots">
            <circle cx="1206.700" cy="209" r="4"/>
            <circle cx="1224" cy="217" r="4"/><circle cx="1264" cy="217" r="4"/><circle cx="1303" cy="217" r="4"/><circle cx="1340" cy="217" r="4"/>
            <circle cx="1224" cy="286" r="4"/><circle cx="1264" cy="286" r="4"/><circle cx="1303" cy="286" r="4"/><circle cx="1340" cy="286" r="4"/>
            <circle cx="1059" cy="279" r="4"/><circle cx="1087" cy="316.700" r="4"/>
            <circle cx="1123" cy="345.700" r="4"/><circle cx="1165" cy="345.700" r="4"/><circle cx="1207" cy="345.700" r="4"/><circle cx="1251" cy="345.700" r="4"/><circle cx="1293" cy="345.700" r="4"/>
            <circle cx="1112" cy="351.700" r="4"/><circle cx="1138" cy="385" r="4"/>
            <circle cx="1165" cy="420" r="4"/><circle cx="1207" cy="420" r="4"/><circle cx="1251" cy="420" r="4"/><circle cx="1293" cy="420" r="4"/>
          </g>
          <text class="gt" x="1184" y="157" textLength="33" lengthAdjust="spacingAndGlyphs">FJJ</text>
          <text class="wt" x="1308" y="176" textLength="42" lengthAdjust="spacingAndGlyphs">1000</text>
          <text class="gt" x="1133" y="234" textLength="77" lengthAdjust="spacingAndGlyphs">C12@200</text>
          <text class="gt" x="1133" y="265" textLength="76" lengthAdjust="spacingAndGlyphs">C12@200</text>
          <text class="gt" x="1286" y="239" textLength="76" lengthAdjust="spacingAndGlyphs">C12@150</text>
          <text class="gt" x="1286" y="270" textLength="76" lengthAdjust="spacingAndGlyphs">C12@150</text>
          <text class="gt" x="1184" y="330">L</text>
          <text class="gt" x="1043" y="373" textLength="31" lengthAdjust="spacingAndGlyphs">XMJ</text>
          <text class="gt" x="1042" y="413" textLength="31" lengthAdjust="spacingAndGlyphs">JQJ</text>
          <text class="gt" x="1221" y="388" textLength="43" lengthAdjust="spacingAndGlyphs">XCLJ</text>
          <text class="gt" x="1339" y="365">FBJ</text>
          <text class="gt" x="1342" y="393">FBJ</text>
          <text class="gt" x="1085" y="481" textLength="32" lengthAdjust="spacingAndGlyphs">350</text>
          <text class="gt" x="1181" y="479" textLength="31" lengthAdjust="spacingAndGlyphs">300</text>
          <text class="gt" x="1312" y="479" textLength="20" lengthAdjust="spacingAndGlyphs">50</text>
          <text class="vt" transform="translate(1045 228) rotate(51)">取节点设置</text>
          <text class="ct" x="1203" y="521" textLength="175">矩形下沉后浇带</text>
        </svg>
      </div>
    </div>
    <div class="dlg-foot"><button class="dlg-btn">配筋形式</button></div>
  </div>

  <div class="redbox rb1"></div>
  <div class="redbox rb2"></div>
</div>
</body>
</html>
```

FILE: styles.css
```css
* { box-sizing: border-box; }
html, body { margin: 0; padding: 0; }
body { width: 1366px; height: 768px; overflow: hidden; background: #f0f0f0; font: 12px/16px "Noto Sans CJK SC", "Noto Sans", sans-serif; color: #111; }
.defs { display: block; width: 0; height: 0; }
.screen { position: relative; width: 1366px; height: 768px; overflow: hidden; display: flex; flex-direction: column; }
b { font-family: "Liberation Mono", monospace; font-weight: 400; font-size: 10px; }
button { font: inherit; color: inherit; }
i { font-style: normal; }

/* title */
.titlebar { flex: none; height: 23px; background: #fff; display: flex; align-items: center; padding-left: 2px; }
.ico16 { width: 16px; height: 16px; flex: none; }
.title-text { margin-left: 5px; color: #7c7c7c; font-size: 12.200px; letter-spacing: .25px; white-space: nowrap; }
.winbtns { margin-left: auto; display: flex; align-items: center; }
.wb-min { width: 10px; border-top: 1px solid #888; }
.wb-max { width: 10px; height: 10px; border: 1px solid #888; margin-left: 35px; }
.wb-close { width: 11px; height: 11px; margin: 0 20px 0 35px; fill: none; stroke: #888; }

/* menu */
.menubar { flex: none; height: 28px; background: #f0f0f0; display: flex; align-items: center; padding-left: 7px; white-space: nowrap; }
.mi { margin-right: 9.700px; }
.mi-q { margin-right: 15px; }
.mi-v { margin-right: 11px; }
.mi-bim { margin-right: 14px; }
.mico1 { width: 15px; height: 20px; margin: 0 4px 0 -2px; }
.mi-a { margin-right: 6px; }
.arrow { display: inline-block; width: 0; height: 0; border: 3px solid transparent; border-top: 3px solid #111; border-bottom: 0; flex: none; }
.arrow-m { margin-right: 6px; }
.arrow-g { border-top-color: #888; }
.mico2 { width: 18px; height: 18px; margin-right: 4px; }
.menu-right { margin-left: auto; display: flex; align-items: center; padding-right: 0; }
.mi-b { margin-left: 8px; margin-right: 10px; }
.mico3 { width: 12px; height: 18px; margin-right: 9px; }
.mico4 { width: 16px; height: 18px; margin-right: 3px; }
.menu-right .mi:last-child { margin-right: 6px; }

/* toolbar */
.toolbar { flex: none; height: 29px; background: linear-gradient(#f3f3f3, #ececec); display: flex; align-items: flex-start; }
.tgroup { display: flex; align-items: center; height: 26px; }
.tg1 { width: 152px; padding-left: 7px; }
.t-doc { width: 11px; height: 16px; margin-right: 10px; }
.t-open { width: 16px; height: 16px; margin-right: 5px; }
.t-save { width: 15px; height: 16px; margin-left: 9px; }
.tsep { width: 1px; height: 24px; background: #bbb; margin: 0 7px; }
.t-undo { width: 14px; height: 14px; margin-right: 8px; }
.more { margin-left: 20px; font-weight: 700; font-size: 13px; margin-top: -6px; }
.tg2 { padding-left: 6px; }
.t-i { width: 16px; height: 16px; margin-right: 3.500px; flex: none; }
.t-l { margin-right: 7.500px; white-space: nowrap; }
.dim { color: #9a9a9a; }
.sigma { width: 12px; margin: 0 5px 0 1px; font-weight: 700; font-size: 14px; }

/* workspace */
.workspace { flex: 1; min-height: 0; display: flex; }
.leftnav { flex: none; width: 161px; display: flex; flex-direction: column; padding-top: 1px; background: #f0f0f0; }
.nav-head { height: 17px; display: flex; align-items: center; border: 1px solid #a0a0a0; border-right: 0; line-height: 14px; }
.nav-head > span:first-child { flex: 1; margin-left: -1px; }
.pin { width: 18px; font-size: 9px; color: #222; font-family: "DejaVu Sans", sans-serif; }
.closex { width: 18px; font-size: 13px; color: #444; font-family: "DejaVu Sans", sans-serif; }
.navbtn { display: block; width: 160px; margin: 0 0 1px 1px; padding: 0; background: #f0f0f0; border: 1px solid #c0c0c0; border-bottom-color: #8f8f8f; border-right-color: #a0a0a0; }
.nb1 { height: 22px; }
.nb2 { height: 21px; padding-bottom: 3px; }
.nb3 { height: 21px; margin-top: 1px; }
.nb4 { height: 21px; }
.tree-tools { height: 27px; display: flex; align-items: center; padding: 2px 0 0 7px; }
.pm { width: 17px; height: 15px; }
.pm2 { margin-left: 8px; }
.tree { background: #fff; overflow: hidden; }
.navtree { width: 158px; height: 490px; margin-left: 2px; border: 1px solid #8e8e8e; padding-top: 0; }
.row, .leaf { display: flex; align-items: center; height: 16px; white-space: nowrap; }
.row { padding-left: 6px; }
.chev-d { width: 10px; height: 8px; }
.chev-r { width: 8px; height: 12px; margin-left: 2px; }
.hdot { width: 5px; margin-left: 3px; border-top: 1px dotted #777; }
.fold { width: 16px; height: 14px; margin: 0 4px 0 0; flex: none; }
.kids { margin-left: 12px; padding-left: 18px; position: relative; }
.kids::before { content: ""; position: absolute; left: 0; top: 0; bottom: 3px; border-left: 1px dotted #777; }
.tee { flex: none; align-self: flex-start; width: 12px; height: 16px; border-left: 1px dotted #777; }
.tee::after { content: ""; display: block; height: 8px; border-bottom: 1px dotted #777; }
.leaf:last-child .tee, .cleaf:last-child .tee { height: 9px; }
.lic { width: 15px; height: 15px; margin-right: 6px; flex: none; }
.sel-wrap { display: flex; align-items: center; background: #d4d4d4; height: 16px; width: 87px; margin-left: -3px; padding-left: 3px; }

/* content */
.content { flex: 1; min-width: 0; display: flex; flex-direction: column; padding-left: 6px; }
.subbar { flex: none; height: 29px; display: flex; align-items: center; padding: 0 0 0 4px; white-space: nowrap; }
.s-i { width: 15px; height: 16px; margin-right: 4px; flex: none; }
.s-l { margin-right: 4px; }
.subbar .arrow { margin-right: 8px; }
.subbar .arrow-t { margin-right: 5px; }
.s-x { width: 13px; height: 13px; margin-right: 5px; }
.s-copy { margin-left: 3px; margin-right: 5px; }
.s-ren { margin-left: 3px; }
.ssep { width: 1px; height: 22px; background: #bbb; margin: 0 5px; flex: none; }
.ssep1 { margin-left: 1px; }
.ssep3 { margin-right: 6px; }
.s-imp { width: 16px; margin-right: 5px; }
.floor-sel { width: 62px; height: 24px; margin-left: 2px; background: #fff; display: flex; align-items: center; justify-content: space-between; padding: 0 4px 0 3px; }
.floor-sel .arrow { margin-right: 0 !important; }
.panes { flex: 1; min-height: 0; display: flex; padding-bottom: 3px; }
.midpane { flex: none; width: 184px; display: flex; flex-direction: column; }
.searchrow { flex: none; height: 29px; display: flex; align-items: flex-start; padding: 5px 0 0 1px; }
.searchbox { width: 157px; height: 24px; background: #fff; border: 1px solid #909090; padding: 1px 2px; color: #777; }
.searchico { width: 16px; height: 16px; margin: 4px 0 0 5px; }
.comptree { flex: 1; border: 1px solid #8e8e8e; border-top-color: #aaa; padding-top: 2px; }
.comptree .row { padding-left: 7px; }
.comptree .lic { margin-right: 5px; }
.ckids { margin-left: 31px; padding-top: 1px; }
.cleaf { display: flex; align-items: center; height: 16px; }
.hjd { display: flex; align-items: center; width: 57px; height: 16px; padding-left: 9px; margin-left: -1px; color: #111; }
.hjd b { font-size: 10px; }
.hjd-on { background: #316ac5; color: #fff; }
.gear { width: 10px; height: 10px; margin-right: 4px; flex: none; }
.cleaf .tee { width: 10px; }

.proppane { flex: none; width: 420px; margin-left: 1px; background: #fff; position: relative; margin-top: 2px; height: 594px; border-left: 1px solid #c8c8c8; }
.tabs { height: 19px; background: #f0f0f0; border-bottom: 1px solid #bdbdbd; padding-left: 4px; }
.tab { display: inline-block; height: 19px; width: 61px; background: #fff; border-right: 1px solid #c0c0c0; padding: 1px 0 0 1px; }
.props { border-collapse: collapse; table-layout: fixed; width: 412px; margin: 4px 0 0 7px; }
.c-n { width: 21px; }
.c-k { width: 190px; }
.c-v { width: 201px; }
.props th, .props td { height: 19px; padding: 0; border: 1px solid #b8b8b8; white-space: nowrap; font-weight: 400; overflow: hidden; line-height: 14px; }
.props tr.ph th { height: 22px; background: linear-gradient(#fafafa, #e8e8e8); border-top-color: #aaa; }
.props tr.ph th.valh { background: linear-gradient(#fde0a8, #e8b45a); color: #5a0070; padding-right: 77px; }
.n { background: #f3f3f3; text-align: center; font-family: "Liberation Sans", sans-serif; font-size: 11px; }
.k { padding-left: 19px !important; }
.v { padding-left: 2px !important; }
.blue { color: #0000e0; }
.gray { color: #8e8e8e; padding-left: 3px !important; }
.box { display: inline-block; width: 13px; height: 13px; margin-right: 4px; border: 1px solid #a0a0a0; background: #fff; color: #222; text-align: center; font: 12px/11px "DejaVu Sans", sans-serif; vertical-align: top; }
.kid2 { padding-left: 29px !important; position: relative; }
.branch::before { content: ""; position: absolute; left: 8px; top: -4px; width: 17px; height: 14px; border-left: 1px solid #a8a8a8; border-bottom: 1px solid #a8a8a8; }
.branch-end::before { top: -10px; height: 20px; }
.cur .n { background: #fbd08c; color: #7a4000; }
.cur .k { background: #0078d7; color: #fff; }
.cur .branch::before { border-color: #cfe4f8; }
.cur .v { background: #d5e7f7; }
.preview { flex: none; width: 593px; padding: 0 0 3px 3px; margin-left: -1px; overflow: hidden; background: #fff; border-right: 1px solid #ccc; }
.preview-frame { height: 100%; width: 570px; background: #d8e6f4; border: 1px solid #555; border-width: 0 1px 1px 1px; padding: 0 7px 9px 8px; }
.preview-black { height: 100%; background: #000; }

/* status */
.statusbar { flex: none; height: 20px; display: flex; background: #f2f2f2; }
.st { flex: none; height: 20px; border: 1px solid #dcdcdc; border-bottom-color: #c8c8c8; margin-right: 3px; padding-left: 1px; white-space: nowrap; overflow: hidden; }
.st1 { width: 147px; }
.st2 { width: 77px; }
.st3 { width: 97px; padding-left: 2px; }
.st4 { width: 47px; padding-left: 2px; }
.st5 { width: 914px; }
.st6 { width: 70px; margin-right: 0; }

/* taskbar */
.taskbar { flex: none; height: 40px; display: flex; background: #07181e; color: #eee; }
.tb { flex: none; height: 40px; display: flex; align-items: center; justify-content: center; position: relative; }
.tb-start { width: 48px; background: #000; }
.tb-win { width: 16px; height: 16px; }
.tb-search { width: 345px; background: #f1f1f1; color: #333; justify-content: flex-start; padding-left: 9px; }
.cortana { width: 22px; height: 22px; border-radius: 50%; border: 3px solid #222; }
.tb-hint { margin-left: 9px; }
.tb-mic { width: 12px; height: 18px; margin-left: auto; margin-right: 15px; }
.tb-tv { width: 48px; }
.tb-fan { width: 50px; }
.tb-ie { width: 150px; height: 32px; margin: 4px 0 0 2px; background: #444; border: 1px solid #666; justify-content: space-between; padding: 0 7px 0 4px; }
.tb-e { width: 20px; height: 22px; }
.tb-ms { width: 16px; height: 16px; fill: none; stroke: #9a9a9a; stroke-width: 1.300; }
.tb-sw { width: 52px; justify-content: flex-start; padding-left: 13px; }
.tb-bellmark { position: absolute; left: 28px; top: 5px; width: 11px; height: 12px; border-radius: 6px 6px 1px 1px; background: #f0b020; }
.tb-ic24 { width: 24px; height: 24px; }
.tb-ic26 { width: 24px; height: 24px; }
.tb-ic18 { width: 16px; height: 18px; }
.tb-ic16 { width: 16px; height: 16px; }
.tb-g { width: 42px; }
.tb-act { width: 41px; background: #2b3c44; }
.tb-n { width: 42px; }
.tb-p { width: 45px; }
.run::after { content: ""; position: absolute; left: 4px; right: 4px; bottom: 0; height: 2px; background: #76b9ed; }
.tb-act::after { left: 0; right: 0; }
.tb-scroll { width: 17px; background: #e8e8e8; color: #444; flex-direction: column; font: 700 11px/14px "DejaVu Sans", sans-serif; }
.tb-people { width: 60px; }
.tb-cpu { width: 66px; flex-direction: column; line-height: 17px; }
.tb-up { width: 32px; }
.tb-caret { width: 13px; height: 8px; fill: none; stroke: #eee; stroke-width: 1.300; }
.tb-tray22 { width: 22px; }
.tb-tray24 { width: 24px; }
.tb-tray30 { width: 30px; }
.tb-kbd { width: 22px; height: 16px; }
.tb-zh { width: 28px; font-size: 13px; }
.tb-clock { width: 80px; flex-direction: column; line-height: 19px; }
.tb-note { width: 48px; padding-right: 12px; }
.tb-count { position: absolute; left: 11px; top: 21px; width: 16px; height: 16px; border-radius: 50%; background: #3a3a3a; border: 1px solid #bbb; color: #fff; font: 700 10px/14px "Liberation Sans", sans-serif; text-align: center; }

/* floating */
.badge85 { position: absolute; left: 720px; top: -21px; width: 40px; height: 40px; border-radius: 50%; background: radial-gradient(circle at 50% 70%, #ff9820, #f07008); box-shadow: 0 1px 4px rgba(0,0,0,.5), 0 0 0 1px #ddd; color: #fff; font-weight: 700; font-size: 11px; text-align: center; padding-top: 20px; }
.sogou { position: absolute; left: 997px; top: 16px; display: flex; align-items: center; }
.sg-logo { width: 26px; height: 27px; position: relative; z-index: 1; flex: none; }
.sg-bar { width: 178px; height: 24px; margin-top: 1px; background: #fff; border: 1px solid #a8c4dc; border-left: 0; display: flex; align-items: center; padding-left: 6px; color: #1878c8; }
.sg-zh { font-size: 15px; font-weight: 700; width: 19px; flex: none; }
.sg-pt { font-weight: 700; font-size: 14px; width: 23px; text-align: center; flex: none; }
.sg-i { width: 16px; height: 16px; margin-right: 6.500px; fill: none; stroke: #1878c8; stroke-width: 1.400; flex: none; }
.sg-fill { fill: #1878c8; }
.sg-gray { stroke: #bcc4cc; }
.sg-gfill { fill: #bcc4cc; }

.dialog { position: absolute; left: 690px; top: 53px; width: 676px; height: 532px; background: #f0f0f0; border-top: 1px solid #3a8fd8; border-left: 1px solid #5a9ad8; border-bottom: 2px solid #5a8cc0; box-shadow: 0 2px 14px rgba(0,0,0,.45); display: flex; flex-direction: column; }
.dlg-title { flex: none; height: 30px; background: #fff; display: flex; align-items: center; padding: 0 0 2px 7px; }
.dlg-title span { margin-left: 6px; }
.dlg-body { flex: none; height: 463px; display: flex; }
.shapes { flex: none; width: 284px; margin: 1px 0 0; padding: 0 0 0 5px; border: 0; border-top: 1px solid #c8c8c8; height: 456px; min-width: 0; }
.shapes legend { padding: 0; margin-left: 2px; line-height: 12px; }
.thumbs { display: grid; grid-template-columns: 137px 137px; grid-auto-rows: 144px; column-gap: 3px; row-gap: 4px; margin-top: 7px; }
.thumb { border: 1px solid; border-color: #fff #9c9c9c #9c9c9c #fff; padding: 2px; background: #f0f0f0; }
.thumb svg { display: block; width: 131px; height: 139px; background: #6e92a8; shape-rendering: crispEdges; }
.thumb-on { border: 2px solid #00f0f4; padding: 1px; }
.hl { stroke: #fff; stroke-width: 1; fill: none; }
.hf { fill: url(#hatch); }
.ln { fill: none; stroke: #fff; stroke-width: 1; }
.dk { fill: none; stroke: #000; stroke-width: 1; }
.tt { fill: #4b5896; font-size: 15px; text-anchor: middle; }
.ren-a { fill: #3050a0; font: 700 9px "Liberation Sans", sans-serif; }
.az-a { fill: #2060b0; font: 700 8px "Liberation Sans", sans-serif; }
.az-z { fill: #b03030; font: 700 9px "Liberation Sans", sans-serif; }
.pdf-t { fill: #e8d8c0; font: 700 8px "Liberation Sans", sans-serif; text-anchor: middle; }
.drawing { flex: 1; min-width: 0; display: flex; flex-direction: column; margin-left: 6px; height: 463px; margin-top: 0; }
.radio-row { flex: none; height: 30px; margin-left: -1px; display: flex; align-items: center; justify-content: flex-start; border-bottom: 1px solid #a8a8a8; border-left: 1px solid #a8a8a8; border-top: 1px solid #d0d0d0; padding: 4px 0 0 170px; }
.radio { width: 13px; height: 13px; border-radius: 50%; border: 1px solid #444; background: #fff; margin-right: 1px; }
.cad { display: block; width: 385px; height: 433px; background: #000; overflow: hidden; flex: none; }
.w { fill: none; stroke: #fff; stroke-width: 1; shape-rendering: crispEdges; }
.dash { stroke-dasharray: 12 3; }
.dashdot { stroke-dasharray: 10 3; }
.r1 { fill: none; stroke: #f00; stroke-width: 1; }
.r2 { fill: none; stroke: #f00; stroke-width: 2; }
.r3 { fill: none; stroke: #f00; stroke-width: 3; }
.y2 { fill: none; stroke: #ff0; stroke-width: 2; }
.dots { fill: #f00; }
.gt { fill: #00d400; font: 21px "Liberation Serif", serif; }
.wt { fill: #fff; font: 21px "Liberation Serif", serif; }
.vt { fill: #fff; font-size: 18px; letter-spacing: 3px; }
.ct { fill: #fff; font-size: 24px; }
.dlg-foot { flex: 1; min-height: 0; display: flex; align-items: center; padding: 1px 0 0 336px; border-top: 1px solid #b8b8b8; }
.dlg-btn { width: 89px; height: 25px; background: #f0f0f0; border: 2px solid #0a70c8; padding: 0; }

.redbox { position: absolute; border: 0 solid #f00; }
.rb1 { left: 0; top: 466px; width: 186px; height: 40px; border-width: 5px 7px 7px 4px; }
.rb2 { left: 660px; top: 327px; width: 96px; height: 35px; border-width: 6px 7px 7px 7px; }
```
